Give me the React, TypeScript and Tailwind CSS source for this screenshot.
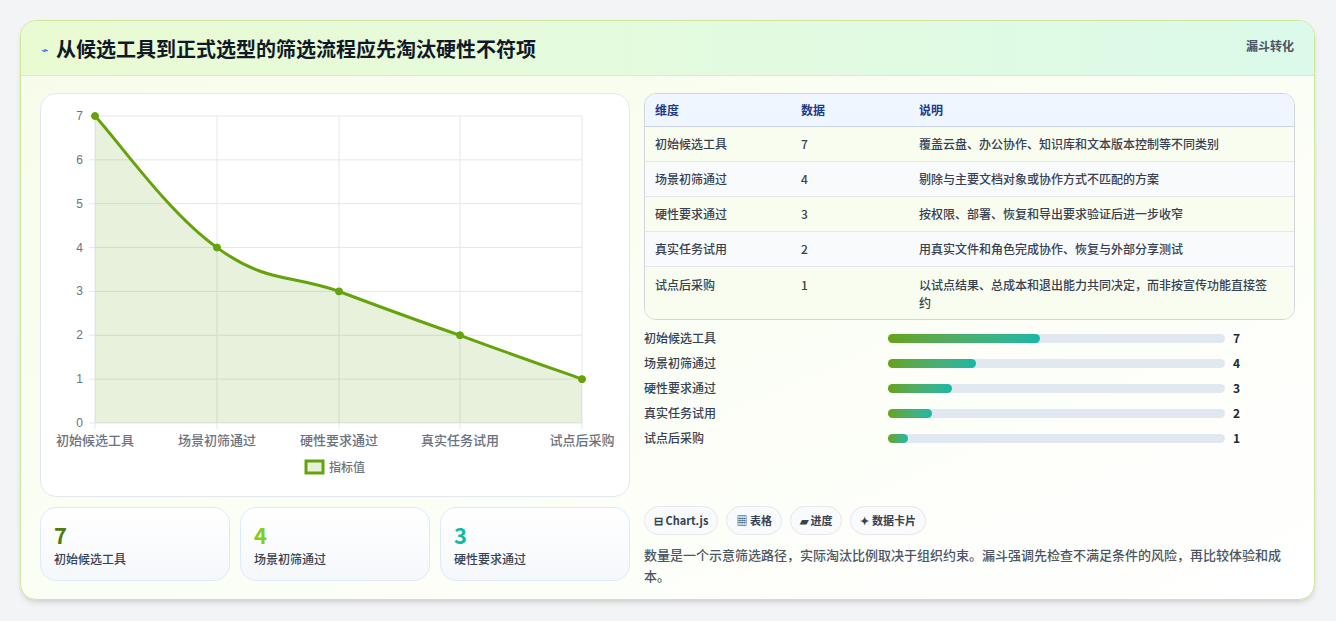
import React from "react";

const rows = [
  ["初始候选工具", "7", "覆盖云盘、办公协作、知识库和文本版本控制等不同类别"],
  ["场景初筛通过", "4", "剔除与主要文档对象或协作方式不匹配的方案"],
  ["硬性要求通过", "3", "按权限、部署、恢复和导出要求验证后进一步收窄"],
  ["真实任务试用", "2", "用真实文件和角色完成协作、恢复与外部分享测试"],
  ["试点后采购", "1", "以试点结果、总成本和退出能力共同决定，而非按宣传功能直接签约"],
];
const bars = [45, 26, 19, 13, 6];

const xs = [54, 176, 298, 419, 541];
const yv = (v: number) => 329 - v * 43.86;
const linePath = "M54,22 C78.4,48.4 127.2,118.8 176,153.6 C224.8,189.2 249.4,180.4 298,197.4 C346.6,215.6 370.4,224.6 419,241.3 C467.6,259.4 516.6,276.4 541,285.1";

function Chart() {
  const labels = ["初始候选工具", "场景初筛通过", "硬性要求通过", "真实任务试用", "试点后采购"];
  const vals = [7, 4, 3, 2, 1];
  return (
    <svg width="589" height="402" className="block" style={{ fontFamily: "'Liberation Sans','Noto Sans CJK SC',sans-serif" }}>
      {[0, 1, 2, 3, 4, 5, 6, 7].map((v) => (
        <g key={v}>
          <line x1={48} x2={541} y1={yv(v)} y2={yv(v)} stroke="#e5e7eb" />
          <text x={42} y={yv(v) + 4} fontSize="12" fill="#6b7280" textAnchor="end">{v}</text>
        </g>
      ))}
      {xs.map((x) => (
        <line key={x} x1={x} x2={x} y1={22} y2={335} stroke="#e5e7eb" />
      ))}
      <path d={linePath + " L541,329 L54,329 Z"} fill="rgba(101,163,13,0.15)" />
      <path d={linePath} fill="none" stroke="#65a30d" strokeWidth="3" />
      {xs.map((x, i) => (
        <circle key={x} cx={x} cy={yv(vals[i])} r="3.5" fill="#65a30d" stroke="#65a30d" />
      ))}
      {xs.map((x, i) => (
        <text key={i} x={x} y={351} fontSize="13" fontWeight="500" fill="#6b7280" textAnchor="middle">{labels[i]}</text>
      ))}
      <rect x={265} y={367} width={17} height={12} fill="#e8f0dc" stroke="#65a30d" strokeWidth="3" />
      <text x={288} y={378} fontSize="12" fontWeight="500" fill="#6b7280">指标值</text>
    </svg>
  );
}

export default function App() {
  return (
    <div className="w-[1336px] h-[621px] bg-[#f3f4f6] pt-[20px] px-[20px]" style={{ fontFamily: "'Noto Sans CJK SC','Liberation Sans',sans-serif" }}>
      <div className="w-[1295px] h-[580px] rounded-2xl border border-[#cde89a] bg-gradient-to-br from-[#f7fce9] via-[#fbfef4] to-white overflow-hidden shadow-md">
        <div className="h-[55px] flex items-start justify-between px-5 bg-gradient-to-r from-[#eafbd2] to-[#dcfaea] border-b border-[#dfe8d4]">
          <div className="flex items-center gap-2 pt-[14px]">
            <span className="text-[#2563eb] text-[12px] -rotate-12">⌁</span>
            <h1 className="text-[20px] font-bold text-[#111827] leading-7">从候选工具到正式选型的筛选流程应先淘汰硬性不符项</h1>
          </div>
          <div className="pt-[16px] text-[12px] font-bold text-[#4b5563]">漏斗转化</div>
        </div>
        <div className="flex gap-[14px] pl-[19px] pr-[19px] pt-[17px]">
          <div className="w-[590px] flex flex-col gap-[10px]">
            <div className="h-[404px] rounded-2xl border border-[#e2e8f0] bg-white">
              <Chart />
            </div>
            <div className="grid grid-cols-3 gap-[10px]">
              {[["7", "text-[#4d7c0f]", "初始候选工具"], ["4", "text-[#84cc16]", "场景初筛通过"], ["3", "text-[#14b8a6]", "硬性要求通过"]].map(([n, c, l]) => (
                <div key={l} className="h-[74px] rounded-2xl border border-[#dbeafe] bg-gradient-to-b from-white to-[#f5f8fc] px-[13px] pt-[12px]">
                  <div className={`text-[22px] font-bold leading-7 ${c}`}>{n}</div>
                  <div className="text-[12px] font-medium text-[#374151] mt-[2px]">{l}</div>
                </div>
              ))}
            </div>
          </div>
          <div className="flex-1 flex flex-col">
            <div className="rounded-xl border border-[#d1d5db] overflow-hidden text-[12px] font-medium">
              <div className="flex h-[33px] items-center bg-[#eff6ff] border-b border-[#cbd5e1] text-[#1e3a8a] font-bold">
                <div className="w-[156px] pl-[10px]">维度</div>
                <div className="w-[118px]">数据</div>
                <div className="flex-1">说明</div>
              </div>
              {rows.map((r, i) => (
                <div key={i} className={`flex ${i < 4 ? "h-[35px] items-center border-b border-[#e2e8f0]" : "h-[52px] pt-[9px]"} ${i % 2 ? "bg-[#f8fafc]" : "bg-[#f9fdf0]"} text-[#374151]`}>
                  <div className="w-[156px] pl-[10px]">{r[0]}</div>
                  <div className="w-[118px]">{r[1]}</div>
                  <div className="flex-1 pr-4 leading-[18px]">{r[2]}</div>
                </div>
              ))}
            </div>
            <div className="flex flex-col gap-[9px] mt-[10px]">
              {rows.map((r, i) => (
                <div key={i} className="flex items-center h-[16px] text-[12px]">
                  <div className="w-[244px] font-medium text-[#374151]">{r[0]}</div>
                  <div className="w-[337px] h-[9px] rounded-full bg-[#e2e8f0]">
                    <div className="h-full rounded-full bg-gradient-to-r from-[#65a30d] to-[#14b8a6]" style={{ width: `${bars[i]}%` }} />
                  </div>
                  <div className="ml-[8px] font-bold text-[#1f2937]">{r[1]}</div>
                </div>
              ))}
            </div>
            <div className="flex gap-[8px] mt-[60px]">
              {["⊟ Chart.js", "▦ 表格", "▰ 进度", "✦ 数据卡片"].map((t) => (
                <div key={t} className="h-[29px] px-[9px] flex items-center rounded-full border border-[#e5e7eb] bg-[#f8fafc] text-[11px] font-bold text-[#374151]">{t}</div>
              ))}
            </div>
            <p className="mt-[9px] text-[13px] font-medium leading-[21px] text-[#4b5563] pr-3">数量是一个示意筛选路径，实际淘汰比例取决于组织约束。漏斗强调先检查不满足条件的风险，再比较体验和成本。</p>
          </div>
        </div>
      </div>
    </div>
  );
}
